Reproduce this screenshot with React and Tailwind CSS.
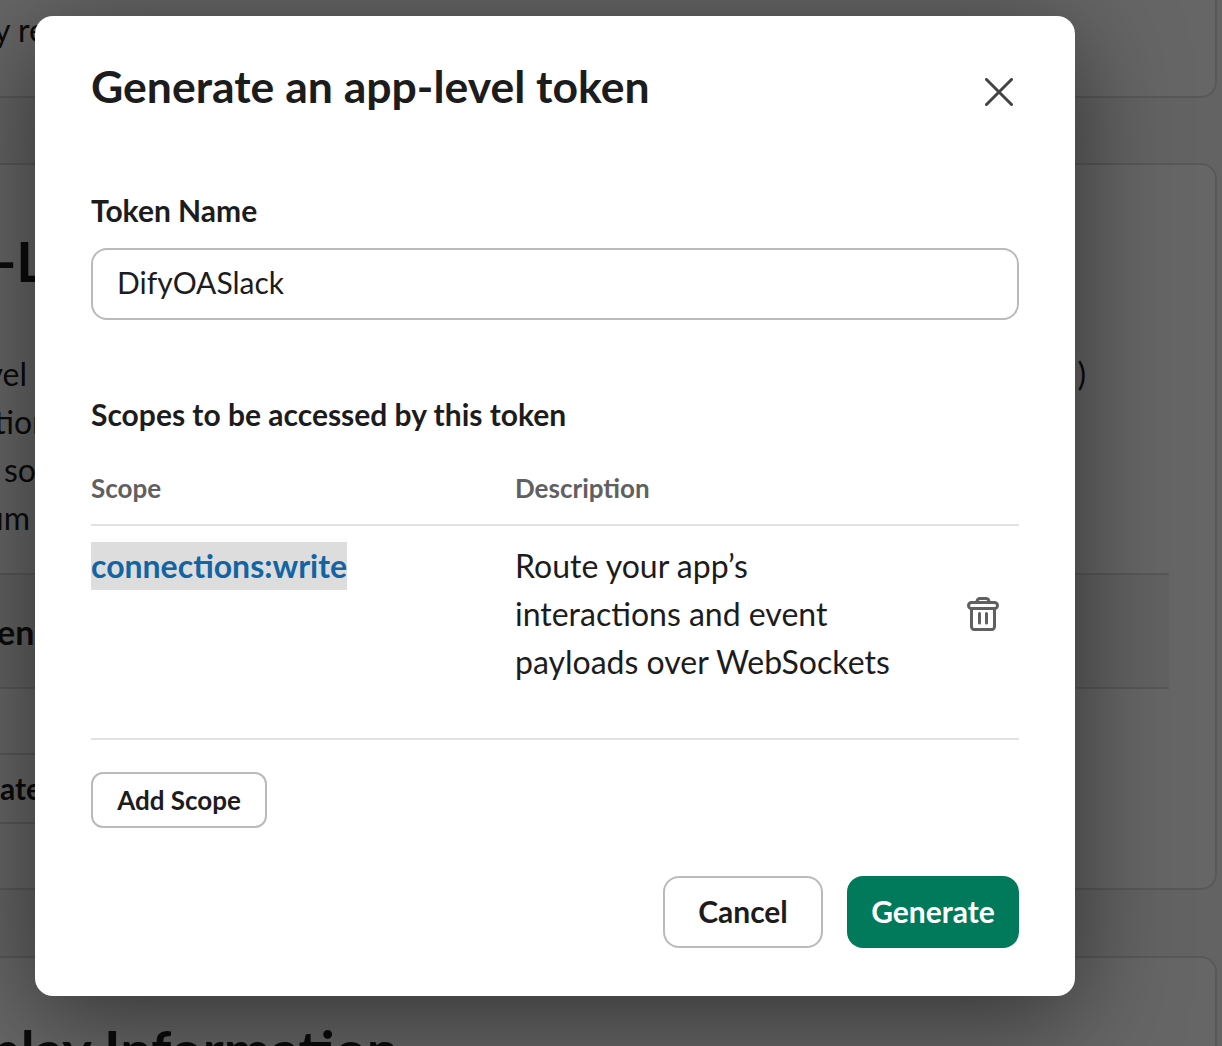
import React from "react";

function Trash() {
  return (
    <svg width="32" height="34" viewBox="0 0 32 34" fill="none" stroke="#616061" strokeWidth="3" strokeLinecap="round" strokeLinejoin="round">
      <path d="M10 5V4.5a3 3 0 0 1 3-3h6a3 3 0 0 1 3 3V5" />
      <rect x="1.5" y="5.5" width="29" height="6" rx="3" />
      <path d="M4.5 11.5V29a3 3 0 0 0 3 3.5h17a3 3 0 0 0 3-3.5V11.5" />
      <path d="M12.5 16.5v9.5M19.5 16.5v9.5" />
    </svg>
  );
}

function Close() {
  return (
    <svg width="28" height="28" viewBox="0 0 28 28" fill="none" stroke="#454245" strokeWidth="3" strokeLinecap="round">
      <path d="M1.5 1.5l25 25M26.5 1.5l-25 25" />
    </svg>
  );
}

function Background() {
  return (
    <div className="absolute left-0 top-0 h-[1046px] w-[1222px] overflow-hidden bg-[#f8f8f8] font-['Lato','Liberation_Sans',sans-serif] text-[#1d1c1d]">
      <div className="ml-[-100px] mt-[-60px] flex w-[1317px] flex-col gap-[65px]">
        <section className="h-[158px] rounded-[16px] border-2 border-[#dddddd] bg-white pt-[16px] text-[32px] leading-[48px]">
          <p className="flex h-[48px] whitespace-nowrap">
            <span className="w-[763px] text-right">y</span>
            <span className="ml-[97px] w-[290px]">p</span>
            <span>,</span>
          </p>
          <p className="h-[48px] whitespace-nowrap pl-[92px]">y re</p>
        </section>
        <section className="h-[727px] rounded-[16px] border-2 border-[#dddddd] bg-white">
          <h2 className="ml-[-9px] mt-[68px] h-[56px] whitespace-nowrap text-[56px] font-bold leading-[56px]">App-Level</h2>
          <div className="mt-[61px] text-[32px] leading-[48px]">
            <div className="flex w-[1184px] justify-between">
              <span className="w-[125px] text-right">level</span>
              <span>)</span>
            </div>
            <div className="w-[148px] text-right">action</div>
            <div className="pl-[102px]">so</div>
            <div className="w-[128px] text-right">num</div>
          </div>
          <div className="mt-[31px] w-[1267px] border-y-2 border-[#dddddd] bg-[#f4f4f4] pl-[42px]">
            <div className="flex h-[112px] items-center text-[34px] font-bold">Tokens</div>
          </div>
          <div className="h-[66px] w-[1000px] border-b-2 border-[#dddddd]" />
          <div className="flex h-[69px] w-[1000px] items-center border-b-2 border-[#dddddd] pl-[98px] text-[30px] font-bold">ate</div>
        </section>
        <section className="mt-[1px] h-[300px] rounded-[16px] border-2 border-[#dddddd] bg-white pt-[64px]">
          <h2 className="ml-[6px] whitespace-nowrap text-[56px] font-bold leading-[56px]">Display Information</h2>
        </section>
      </div>
    </div>
  );
}

export default function App() {
  return (
    <div className="relative h-[1046px] w-[1222px] overflow-hidden font-['Lato','Liberation_Sans',sans-serif]">
      <Background />
      <div className="absolute inset-0 bg-black/60 pl-[35px] pt-[16px]">
        <div className="flex h-[980px] w-[1040px] flex-col rounded-[18px] bg-white px-[56px] text-[#1d1c1d] shadow-[0_20px_100px_rgba(0,0,0,0.5)]">
          <div className="flex items-start justify-between">
            <h1 className="mt-[40px] text-[44.5px] font-bold leading-[60px]">Generate an app-level token</h1>
            <button className="mr-[6px] mt-[62px]"><Close /></button>
          </div>
          <label className="mt-[70px] block h-[48px] text-[30px] font-bold leading-[48px]">Token Name</label>
          <div className="mt-[14px] flex h-[72px] items-center rounded-[16px] border-2 border-[#bbbabb] px-[24px] pb-[4px] text-[30px]">DifyOASlack</div>
          <h2 className="mt-[70px] h-[48px] text-[30px] font-bold leading-[48px]">Scopes to be accessed by this token</h2>
          <div className="mt-[14px] flex h-[74px] items-center border-b-2 border-[#e2e2e2] text-[26px] font-bold text-[#616061]">
            <span className="w-[424px]">Scope</span>
            <span>Description</span>
          </div>
          <div className="flex h-[214px] border-b-2 border-[#e2e2e2] pt-[16px] text-[32px] leading-[48px]">
            <div className="w-[424px]">
              <span className="inline-block bg-[#dddddd] font-bold text-[#1264a3]">connections:write</span>
            </div>
            <div className="w-[420px]">Route your app’s<br />interactions and event<br />payloads over WebSockets</div>
            <div className="ml-[32px] mt-[55px]"><Trash /></div>
          </div>
          <div className="mt-[32px]">
            <button className="h-[56px] w-[176px] rounded-[12px] border-2 border-[#bbbabb] text-[26px] font-bold">Add Scope</button>
          </div>
          <div className="mt-[48px] flex justify-end gap-[24px]">
            <button className="h-[72px] w-[160px] rounded-[16px] border-2 border-[#bbbabb] pb-[2px] text-[30px] font-bold">Cancel</button>
            <button className="h-[72px] w-[172px] rounded-[16px] bg-[#007a5a] pb-[2px] text-[30px] font-bold text-white">Generate</button>
          </div>
        </div>
      </div>
    </div>
  );
}
